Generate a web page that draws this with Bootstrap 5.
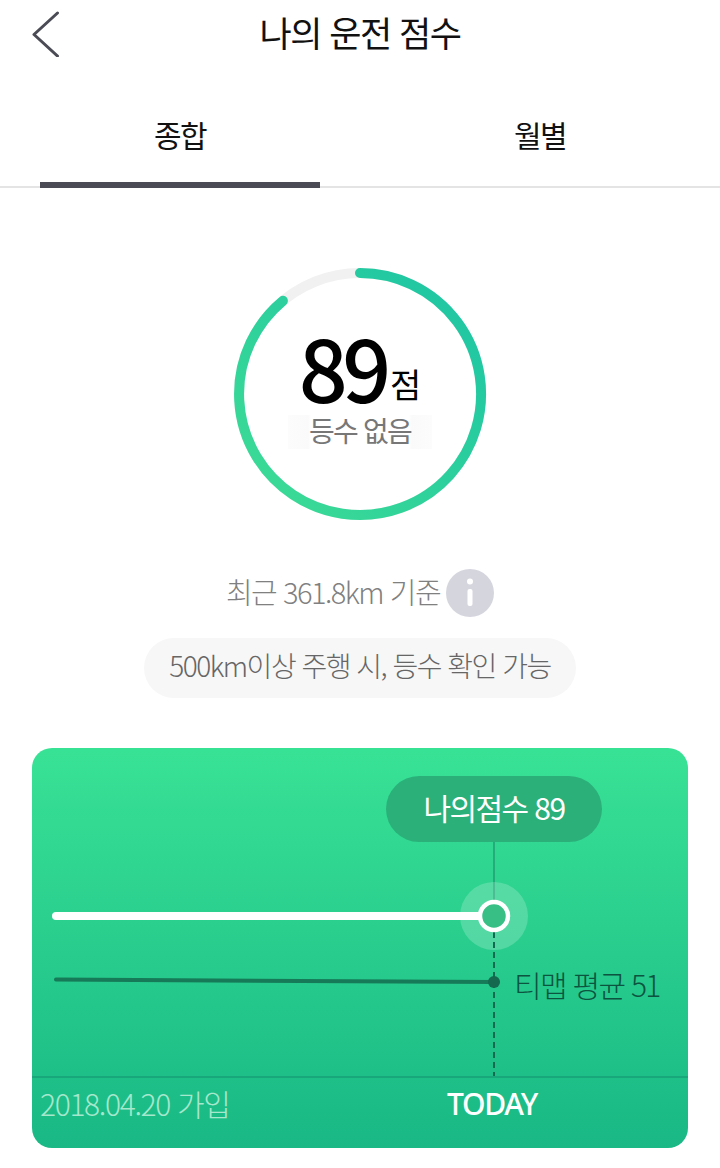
<!DOCTYPE html>
<html lang="ko">
<head>
<meta charset="utf-8">
<title>나의 운전 점수</title>
<link href="https://cdn.jsdelivr.net/npm/bootstrap@5.3.0/dist/css/bootstrap.min.css" rel="stylesheet">
<style>
html,body{margin:0;background:#fff}
body{width:720px;height:1168px;overflow:hidden;font-family:"Noto Sans CJK KR","Noto Sans",sans-serif;font-weight:300;color:#111}
.topbar{height:68px;padding:0 32px}
.topbar svg{display:block}
.page-title{font-size:35px;letter-spacing:-1.5px;font-weight:400;margin:0;line-height:64px;position:absolute;left:0;right:0;top:0;text-align:center}
.tabbar{height:120px;border-bottom:2px solid #e4e4e4;padding-left:40px}
.tab-item{width:280px;height:120px;font-size:30px;letter-spacing:-1.6px;font-weight:400;padding-top:44px;line-height:44px;text-align:center;flex:none}
.tab-on{border-bottom:6px solid #4a4b55}
.tab-off{margin-left:80px;width:280px}
.ring-box{width:256px;height:256px;margin-top:78px;position:relative}
.ring-box svg{display:block}
.ring-text{position:absolute;inset:0;text-align:center}
.score-line{position:absolute;left:0;right:0;top:62px;height:76px;line-height:76px;color:#000}
.score-big{font-size:86px;font-weight:500;letter-spacing:-5.5px}
.score-unit{font-size:34px;font-weight:400;letter-spacing:0;margin-left:4px;vertical-align:5px}
.grade{position:absolute;left:56px;width:144px;top:149px;height:34px;line-height:30px;font-size:28px;letter-spacing:-1.8px;color:#777;font-weight:400;background:linear-gradient(90deg,#fcfcfc 0,#fafafa 14%,#fff 16%,#fff 84%,#fafafa 86%,#fcfcfc 100%)}
.recent-row{margin-top:47px;height:48px;font-size:29px;letter-spacing:-1.5px;color:#808080;gap:6px}
.recent-row span{position:relative;top:-1px}
.note-pill{margin-top:21px;height:60px;width:432px;border-radius:30px;background:#f7f7f7;font-size:28px;letter-spacing:-1.5px;color:#666;line-height:55px;text-align:center}
.score-card{margin:50px 32px 0;width:656px;height:400px;border-radius:20px;background:linear-gradient(180deg,#38e295 0,#19b885 100%);overflow:hidden}
.chart-area{height:328px;position:relative}
.chart-area svg{position:absolute;inset:0}
.bubble{position:absolute;left:354px;top:28px;width:216px;height:66px;border-radius:33px;background:#2bb07a;color:#fff;text-align:center;font-size:30px;letter-spacing:-1.6px;line-height:62px;font-weight:400}
.avg-label{position:absolute;left:482px;top:214px;font-size:30px;line-height:44px;letter-spacing:-1.7px;color:#0d5440;font-weight:300;white-space:nowrap}
.card-foot{height:72px;border-top:2px solid #18a67b;padding:0 151px 0 8px;line-height:50px}
.join-date{font-size:30px;letter-spacing:-1.35px;color:#a5e8cd;font-weight:300}
.today{font-size:30px;letter-spacing:-1.3px;color:#fff;font-weight:500;font-family:"Noto Sans",sans-serif;line-height:52px}
</style>
</head>
<body>
<header class="topbar d-flex align-items-center position-relative">
  <h1 class="page-title">나의 운전 점수</h1>
  <svg width="28" height="46" viewBox="0 0 28 46" aria-label="뒤로"><path d="M25.500 2 2 23.500 25.500 45" fill="none" stroke="#4a4b55" stroke-width="3" stroke-linecap="round" stroke-linejoin="round"/></svg>
</header>
<nav class="tabbar d-flex">
  <div class="tab-item tab-on">종합</div>
  <div class="tab-item tab-off">월별</div>
</nav>
<main class="d-flex flex-column align-items-center">
  <section class="ring-box">
    <svg width="256" height="256" viewBox="0 0 256 256">
      <defs><linearGradient id="ringGrad" x1="1" y1="0" x2="0" y2="1"><stop offset="0" stop-color="#1cc4a4"/><stop offset="1" stop-color="#3edc95"/></linearGradient></defs>
      <circle cx="128" cy="128" r="121" fill="none" stroke="#f1f1f1" stroke-width="10"/>
      <path d="M128 7A121 121 0 1 1 50.900 34.800" fill="none" stroke="url(#ringGrad)" stroke-width="10" stroke-linecap="round"/>
    </svg>
    <div class="ring-text">
      <div class="score-line"><span class="score-big">89</span><span class="score-unit">점</span></div>
      <div class="grade">등수 없음</div>
    </div>
  </section>
  <div class="recent-row d-flex align-items-center">
    <span>최근 361.8km 기준</span>
    <svg width="48" height="48" viewBox="0 0 48 48"><circle cx="24" cy="24" r="24" fill="#d5d5de"/><circle cx="24" cy="12.500" r="3" fill="#fff"/><rect x="21.500" y="20" width="5" height="17" rx="2" fill="#fff"/></svg>
  </div>
  <div class="note-pill">500km이상 주행 시, 등수 확인 가능</div>
  <section class="score-card">
    <div class="chart-area">
      <svg width="656" height="328" viewBox="0 0 656 328">
        <line x1="462" y1="94" x2="462" y2="160" stroke="#1f9a70" stroke-opacity=".7" stroke-width="2"/>
        <circle cx="462" cy="168" r="34" fill="#fff" fill-opacity=".2"/>
        <line x1="462" y1="184" x2="462" y2="328" stroke="#126b50" stroke-width="2" stroke-dasharray="6 4"/>
        <path d="M24 168H446" stroke="#fff" stroke-width="8" stroke-linecap="round"/>
        <circle cx="462" cy="168" r="14" fill="#37bf85" stroke="#fff" stroke-width="4.500"/>
        <path d="M24 231.500 462 234" stroke="#167a58" stroke-width="4" stroke-linecap="round"/>
        <circle cx="462" cy="234" r="6" fill="#14694f"/>
      </svg>
      <div class="bubble">나의점수 89</div>
      <div class="avg-label">티맵 평균 51</div>
    </div>
    <div class="card-foot d-flex justify-content-between">
      <span class="join-date">2018.04.20 가입</span>
      <span class="today">TODAY</span>
    </div>
  </section>
</main>
<script src="https://cdn.jsdelivr.net/npm/bootstrap@5.3.0/dist/js/bootstrap.bundle.min.js"></script>
</body>
</html>
